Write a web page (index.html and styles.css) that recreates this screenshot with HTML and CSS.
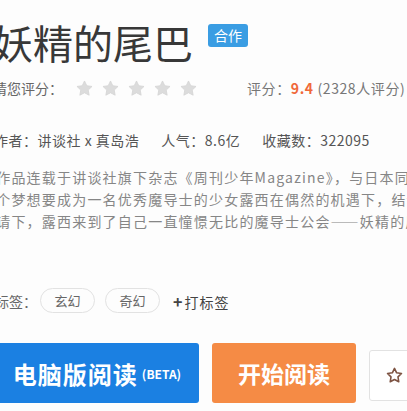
FILE: index.html
```html
<!DOCTYPE html>
<html lang="zh">
<head>
<meta charset="utf-8">
<title>妖精的尾巴</title>
<link rel="stylesheet" href="styles.css">
</head>
<body>
<div class="page">
  <div class="title-row">
    <h1 class="title">妖精的尾巴</h1>
    <span class="badge">合作</span>
  </div>

  <div class="rate-row">
    <span class="label">请您评分：</span>
    <span class="stars">
      <svg class="star" viewBox="0 0 24 24"><path d="M12 2.5l2.9 6 6.6.9-4.8 4.6 1.2 6.5L12 17.4l-5.9 3.1 1.2-6.5-4.8-4.6 6.6-.9z"/></svg>
      <svg class="star" viewBox="0 0 24 24"><path d="M12 2.5l2.9 6 6.6.9-4.8 4.6 1.2 6.5L12 17.4l-5.9 3.1 1.2-6.5-4.8-4.6 6.6-.9z"/></svg>
      <svg class="star" viewBox="0 0 24 24"><path d="M12 2.5l2.9 6 6.6.9-4.8 4.6 1.2 6.5L12 17.4l-5.9 3.1 1.2-6.5-4.8-4.6 6.6-.9z"/></svg>
      <svg class="star" viewBox="0 0 24 24"><path d="M12 2.5l2.9 6 6.6.9-4.8 4.6 1.2 6.5L12 17.4l-5.9 3.1 1.2-6.5-4.8-4.6 6.6-.9z"/></svg>
      <svg class="star" viewBox="0 0 24 24"><path d="M12 2.5l2.9 6 6.6.9-4.8 4.6 1.2 6.5L12 17.4l-5.9 3.1 1.2-6.5-4.8-4.6 6.6-.9z"/></svg>
    </span>
    <span class="score">评分：<b class="num">9.4</b> (2328人评分)</span>
  </div>

  <div class="meta-row">
    <span class="meta">作者：讲谈社 x 真岛浩</span>
    <span class="meta">人气：8.6亿</span>
    <span class="meta">收藏数：322095</span>
  </div>

  <div class="desc">
    <p class="line">该作品连载于讲谈社旗下杂志《周刊少年Magazine》，与日本同期的作品相比</p>
    <p class="line">一个梦想要成为一名优秀魔导士的少女露西在偶然的机遇下，结识了纳兹</p>
    <p class="line">邀请下，露西来到了自己一直憧憬无比的魔导士公会——妖精的尾巴</p>
  </div>

  <div class="tags-row">
    <span class="label">标签：</span>
    <span class="tag">玄幻</span>
    <span class="tag">奇幻</span>
    <span class="add-tag"><b class="plus">+</b>打标签</span>
  </div>

  <div class="btn-row">
    <a class="btn btn-blue">电脑版阅读 <small class="beta">(BETA)</small></a>
    <a class="btn btn-orange">开始阅读</a>
    <a class="btn btn-fav">
      <svg class="fav-star" viewBox="0 0 24 24"><path d="M12 3l2.7 5.6 6.1.9-4.4 4.3 1 6.1L12 17l-5.4 2.9 1-6.1-4.4-4.3 6.1-.9z"/></svg>
    </a>
  </div>
</div>
</body>
</html>
```
FILE: styles.css
```css
html, body {
  margin: 0;
  padding: 0;
  background: #fdfdfd;
  overflow: hidden;
}
body {
  width: 407px;
  height: 411px;
  font-family: "Noto Sans CJK SC", "Noto Sans", sans-serif;
  color: #666;
}
.page {
  margin-left: -17px;
  width: 560px;
  padding-top: 20px;
}
.title-row {
  display: flex;
  align-items: flex-start;
  padding-left: 10px;
}
.title {
  margin: 0;
  font-size: 40px;
  line-height: 44px;
  font-weight: 400;
  color: #383838;
}
.badge {
  margin-left: 15px;
  margin-top: 4px;
  background: #3a9de3;
  color: #fff;
  font-size: 14px;
  line-height: 23px;
  padding: 0 6px;
  border-radius: 3px;
}
.rate-row {
  display: flex;
  align-items: center;
  margin-top: 13px;
  padding-left: 10px;
  height: 22px;
  font-size: 14px;
}
.label { color: #666; }
.stars {
  display: flex;
  gap: 7px;
  margin-left: 12px;
}
.star {
  width: 19px;
  height: 19px;
  fill: #dcdcdc;
  stroke: #d4d4d4;
  stroke-width: 1;
  stroke-linejoin: round;
}
.score {
  margin-left: 49px;
  color: #777;
  white-space: nowrap;
  letter-spacing: 0.6px;
}
.num {
  color: #f0683a;
  font-weight: 700;
}
.meta-row {
  display: flex;
  gap: 22px;
  margin-top: 30px;
  padding-left: 11px;
  height: 22px;
  line-height: 22px;
  font-size: 14px;
  letter-spacing: 0.5px;
  color: #555;
  white-space: nowrap;
}
.desc {
  margin-top: 15px;
  margin-left: -2px;
  font-size: 14px;
  letter-spacing: 1.2px;
  line-height: 22px;
  color: #868686;
}
.line {
  margin: 0;
  white-space: nowrap;
}
.tags-row {
  display: flex;
  align-items: center;
  margin-top: 56px;
  padding-left: 12px;
  font-size: 14px;
}
.tag {
  width: 53px;
  height: 23px;
  margin-left: 3px;
  margin-right: 6px;
  border: 1px solid #e2e2e2;
  border-radius: 13px;
  display: flex;
  align-items: center;
  justify-content: center;
  color: #666;
  font-size: 13px;
}
.tag + .tag { margin-left: 4px; }
.add-tag {
  margin-left: 7px;
  color: #444;
  letter-spacing: 1px;
}
.plus {
  font-size: 16px;
  margin-right: 1px;
}
.btn-row {
  display: flex;
  align-items: flex-start;
  gap: 13px;
  margin-top: 30px;
  padding-left: 12px;
}
.btn {
  display: flex;
  align-items: center;
  justify-content: center;
  height: 60px;
  border-radius: 3px;
  color: #fff;
  font-weight: 700;
  text-decoration: none;
  white-space: nowrap;
}
.btn-blue {
  width: 204px;
  background: #1b80e2;
  font-size: 24px;
  letter-spacing: 1px;
}
.beta {
  font-size: 12px;
  margin-left: 4px;
  letter-spacing: 0;
}
.btn-orange {
  width: 144px;
  background: #f58b45;
  font-size: 23px;
}
.btn-fav {
  width: 50px;
  height: 51px;
  margin-top: 7px;
  background: #fff;
  border: 1px solid #e2e2e2;
  box-sizing: border-box;
  justify-content: flex-start;
  padding-left: 15px;
}
.fav-star {
  width: 19px;
  height: 19px;
  fill: none;
  stroke: #7d5342;
  stroke-width: 2;
  stroke-linejoin: round;
}
```
